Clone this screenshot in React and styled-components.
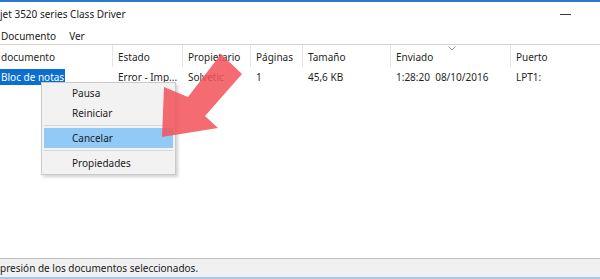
import React from 'react';
import styled, { createGlobalStyle } from 'styled-components';

const GlobalStyle = createGlobalStyle`
  html, body {
    margin: 0;
    padding: 0;
    background: #ffffff;
  }
  body {
    font-family: "Noto Sans", "Open Sans", sans-serif;
    font-size: 10px;
    color: #1a1a1a;
  }
`;

const columns = [
  { key: 'name', title: 'documento', width: 112 },
  { key: 'status', title: 'Estado', width: 70 },
  { key: 'owner', title: 'Propietario', width: 68 },
  { key: 'pages', title: 'Páginas', width: 52 },
  { key: 'size', title: 'Tamaño', width: 88 },
  { key: 'sent', title: 'Enviado', width: 120, sorted: true },
  { key: 'port', title: 'Puerto', width: 90 },
];

const job = {
  name: 'Bloc de notas',
  status: 'Error - Imp...',
  owner: 'Solvetic',
  pages: '1',
  size: '45,6 KB',
  sent: '1:28:20\u00a0\u00a008/10/2016',
  port: 'LPT1:',
};

const menuItems = [
  { label: 'Pausa' },
  { label: 'Reiniciar' },
  { separator: true },
  { label: 'Cancelar', active: true },
  { separator: true },
  { label: 'Propiedades' },
];

const gridTemplate = columns.map((c) => `${c.width}px`).join(' ');

const App = () => {
  return (
    <>
      <GlobalStyle />
      <Window>
        <TitleBar>
          <Title>jet 3520 series Class Driver</Title>
          <Minimize />
        </TitleBar>
        <MenuBar>
          <MenuLabel>Documento</MenuLabel>
          <MenuLabel>Ver</MenuLabel>
        </MenuBar>
        <HeaderRow>
          {columns.map((c, i) => (
            <HeaderCell key={c.key} $first={i === 0}>
              {c.sorted && (
                <SortMark viewBox="0 0 8 5">
                  <path d="M0.5 0.5 L4 4 L7.5 0.5" fill="none" stroke="#9a9a9a" strokeWidth="1" />
                </SortMark>
              )}
              {c.title}
            </HeaderCell>
          ))}
        </HeaderRow>
        <DataRow>
          {columns.map((c, i) => (
            <DataCell key={c.key} $first={i === 0}>
              {i === 0 ? <Selected>{job[c.key]}</Selected> : job[c.key]}
            </DataCell>
          ))}
        </DataRow>
        <Filler />
        <StatusBar>presión de los documentos seleccionados.</StatusBar>

        <ContextMenu>
          {menuItems.map((item, i) =>
            item.separator ? (
              <MenuSeparator key={i} />
            ) : (
              <MenuItem key={i} $active={item.active}>{item.label}</MenuItem>
            )
          )}
        </ContextMenu>

        <Arrow viewBox="0 0 600 279">
          <polygon
            points="162,137 164,87 188,97 221,54 242,74 205,116 218,128"
            fill="#f2545b"
            fillOpacity="0.86"
          />
        </Arrow>
      </Window>
    </>
  );
};

const Window = styled.div`
  position: relative;
  display: flex;
  flex-direction: column;
  width: 600px;
  height: 279px;
  overflow: hidden;
  background: #ffffff;
  border-top: 2px solid #2a78cf;
  box-sizing: border-box;
`;

const TitleBar = styled.div`
  display: flex;
  align-items: center;
  justify-content: space-between;
  height: 25px;
  flex-shrink: 0;
`;

const Title = styled.span`
  font-size: 10px;
  color: #1a1a1a;
  margin-top: -2px;
`;

const Minimize = styled.span`
  width: 11px;
  height: 1px;
  background: #3a3a3a;
  margin-right: 29px;
  margin-top: -1px;
`;

const MenuBar = styled.div`
  display: flex;
  align-items: center;
  gap: 13px;
  height: 17px;
  flex-shrink: 0;
  padding-left: 1px;
`;

const MenuLabel = styled.span`
  color: #1a1a1a;
`;

const HeaderRow = styled.div`
  display: grid;
  grid-template-columns: ${gridTemplate};
  height: 22px;
  flex-shrink: 0;
  border-top: 1px solid #d4d4d4;
`;

const HeaderCell = styled.div`
  position: relative;
  display: flex;
  align-items: center;
  padding-top: 1px;
  padding-left: ${(p) => (p.$first ? '1px' : '5px')};
  border-left: ${(p) => (p.$first ? 'none' : '1px solid #e5e5e5')};
  color: #1f1f1f;
  white-space: nowrap;
  overflow: hidden;
`;

const SortMark = styled.svg`
  position: absolute;
  top: 1px;
  left: 57px;
  width: 8px;
  height: 5px;
`;

const DataRow = styled.div`
  display: grid;
  grid-template-columns: ${gridTemplate};
  height: 19px;
  flex-shrink: 0;
`;

const DataCell = styled.div`
  display: flex;
  align-items: center;
  padding-left: ${(p) => (p.$first ? '0' : '6px')};
  color: #1f1f1f;
  white-space: nowrap;
`;

const Selected = styled.span`
  background: #0a6fd0;
  color: #ffffff;
  padding: 1px 1px;
  line-height: 14px;
`;

const Filler = styled.div`
  flex: 1;
`;

const StatusBar = styled.div`
  display: flex;
  align-items: center;
  height: 18px;
  flex-shrink: 0;
  background: #f0f0f0;
  border-top: 1px solid #bdbdbd;
  border-bottom: 2px solid #a9c8e6;
  color: #1a1a1a;
`;

const ContextMenu = styled.div`
  position: absolute;
  left: 41px;
  top: 80px;
  width: 135px;
  box-sizing: border-box;
  padding: 0 0 1px;
  background: #f2f2f2;
  border: 1px solid #cacaca;
  box-shadow: 2px 2px 3px rgba(0, 0, 0, 0.18);
`;

const MenuItem = styled.div`
  height: 20px;
  display: flex;
  align-items: center;
  margin: 0 2px;
  padding-left: 28px;
  color: #1a1a1a;
  background: ${(p) => (p.$active ? '#91c9f7' : 'transparent')};
`;

const MenuSeparator = styled.div`
  height: 1px;
  margin: 2px;
  background: #d7d7d7;
`;

const Arrow = styled.svg`
  position: absolute;
  left: 0;
  top: -2px;
  width: 600px;
  height: 279px;
  pointer-events: none;
`;

export default App;
